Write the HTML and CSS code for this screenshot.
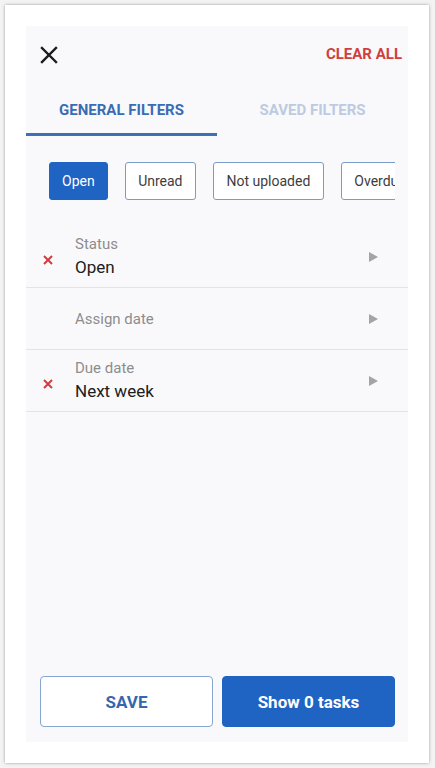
FILE: index.html
```html
<!DOCTYPE html>
<html lang="en">

<head>
    <meta charset="UTF-8">
    <meta name="viewport" content="width=device-width, initial-scale=1.0">
    <title>Filters</title>
    <link rel="stylesheet" href="styles.css">
</head>

<body>

    <div class="frame">
        <div class="screen">
            <!-- Top bar -->
            <div class="topbar">
                <svg class="close" width="18" height="18" viewBox="0 0 18 18">
                    <path d="M2 2 L16 16 M16 2 L2 16" stroke="#1b1b1b" stroke-width="2.4" stroke-linecap="square" fill="none" />
                </svg>
                <span class="clear-all">CLEAR ALL</span>
            </div>

            <!-- Tabs -->
            <div class="tabs">
                <div class="tab active">GENERAL FILTERS</div>
                <div class="tab">SAVED FILTERS</div>
            </div>

            <!-- Quick filter chips -->
            <div class="chips">
                <span class="chip selected">Open</span>
                <span class="chip">Unread</span>
                <span class="chip">Not uploaded</span>
                <span class="chip">Overdue</span>
            </div>

            <!-- Filter rows -->
            <div class="filter-list">
                <div class="filter-row">
                    <span class="remove">
                        <svg width="10" height="10" viewBox="0 0 10 10">
                            <path d="M1 1 L9 9 M9 1 L1 9" stroke="#d23c3c" stroke-width="2" fill="none" />
                        </svg>
                    </span>
                    <div class="filter-text">
                        <div class="filter-label">Status</div>
                        <div class="filter-value">Open</div>
                    </div>
                    <span class="arrow"></span>
                </div>
                <div class="filter-row">
                    <span class="remove"></span>
                    <div class="filter-text">
                        <div class="filter-label">Assign date</div>
                    </div>
                    <span class="arrow"></span>
                </div>
                <div class="filter-row">
                    <span class="remove">
                        <svg width="10" height="10" viewBox="0 0 10 10">
                            <path d="M1 1 L9 9 M9 1 L1 9" stroke="#d23c3c" stroke-width="2" fill="none" />
                        </svg>
                    </span>
                    <div class="filter-text">
                        <div class="filter-label">Due date</div>
                        <div class="filter-value">Next week</div>
                    </div>
                    <span class="arrow"></span>
                </div>
            </div>

            <!-- Actions -->
            <div class="actions">
                <button class="btn btn-outline">SAVE</button>
                <button class="btn btn-primary">Show 0 tasks</button>
            </div>
        </div>
    </div>

</body>

</html>
```

FILE: styles.css
```css
body {
    margin: 0;
    padding: 5px;
    background-color: #f3f3f3;
    font-family: Roboto, "Liberation Sans", sans-serif;
}

.frame {
    width: 424px;
    height: 758px;
    box-sizing: border-box;
    padding: 21px;
    background-color: #ffffff;
    box-shadow: 0 0 3px rgba(0, 0, 0, 0.35);
}

.screen {
    height: 100%;
    display: flex;
    flex-direction: column;
    background-color: #f9f9fc;
}

/* Top bar */
.topbar {
    height: 56px;
    display: flex;
    align-items: center;
    justify-content: space-between;
    padding: 0 6px 0 14px;
}

.close {
    display: block;
    margin-top: 1px;
}

.clear-all {
    color: #d03f3f;
    font-size: 15px;
    font-weight: 700;
}

/* Tabs */
.tabs {
    display: flex;
}

.tab {
    flex: 1;
    text-align: center;
    font-size: 15px;
    font-weight: 700;
    line-height: 16px;
    padding: 20px 0 15px;
    border-bottom: 3px solid transparent;
    color: #bccbe1;
}

.tab.active {
    color: #3a6cb4;
    border-bottom-color: #3f70b6;
}

/* Chips */
.chips {
    display: flex;
    gap: 17px;
    padding: 26px 0 26px 23px;
    margin-right: 13px;
    overflow: hidden;
}

.chip {
    flex-shrink: 0;
    height: 38px;
    box-sizing: border-box;
    display: flex;
    align-items: center;
    padding: 0 12.5px;
    border: 1.5px solid #7b9cc8;
    border-radius: 3px;
    background-color: #ffffff;
    color: #3d3d3d;
    font-size: 14px;
}

.chip.selected {
    background-color: #1f63c3;
    border-color: #1f63c3;
    color: #ffffff;
    padding: 0 12px;
}

/* Filter rows */
.filter-list {
    flex: 1;
}

.filter-row {
    height: 61px;
    display: flex;
    align-items: center;
    border-bottom: 1px solid #e2e3e6;
}

.remove {
    width: 44px;
    display: flex;
    justify-content: center;
    margin-top: 6px;
}

.filter-text {
    flex: 1;
    padding-left: 5px;
}

.filter-label {
    font-size: 15px;
    line-height: 18px;
    color: #8d8d8d;
}

.filter-value {
    font-size: 17px;
    line-height: 22px;
    color: #202020;
    margin-top: 3px;
}

.arrow {
    width: 0;
    height: 0;
    border-top: 5.5px solid transparent;
    border-bottom: 5.5px solid transparent;
    border-left: 9px solid #a4a4a4;
    margin-right: 30px;
}

/* Bottom actions */
.actions {
    display: flex;
    gap: 9px;
    padding: 0 13px 15px 14px;
}

.btn {
    flex: 1;
    height: 51px;
    border-radius: 4px;
    font-family: Roboto, "Liberation Sans", sans-serif;
    font-size: 17px;
    font-weight: 700;
}

.btn-outline {
    background-color: #ffffff;
    border: 1.5px solid #86a5cf;
    color: #3567b1;
}

.btn-primary {
    background-color: #1f63c3;
    border: 1.5px solid #1f63c3;
    color: #ffffff;
}
```
